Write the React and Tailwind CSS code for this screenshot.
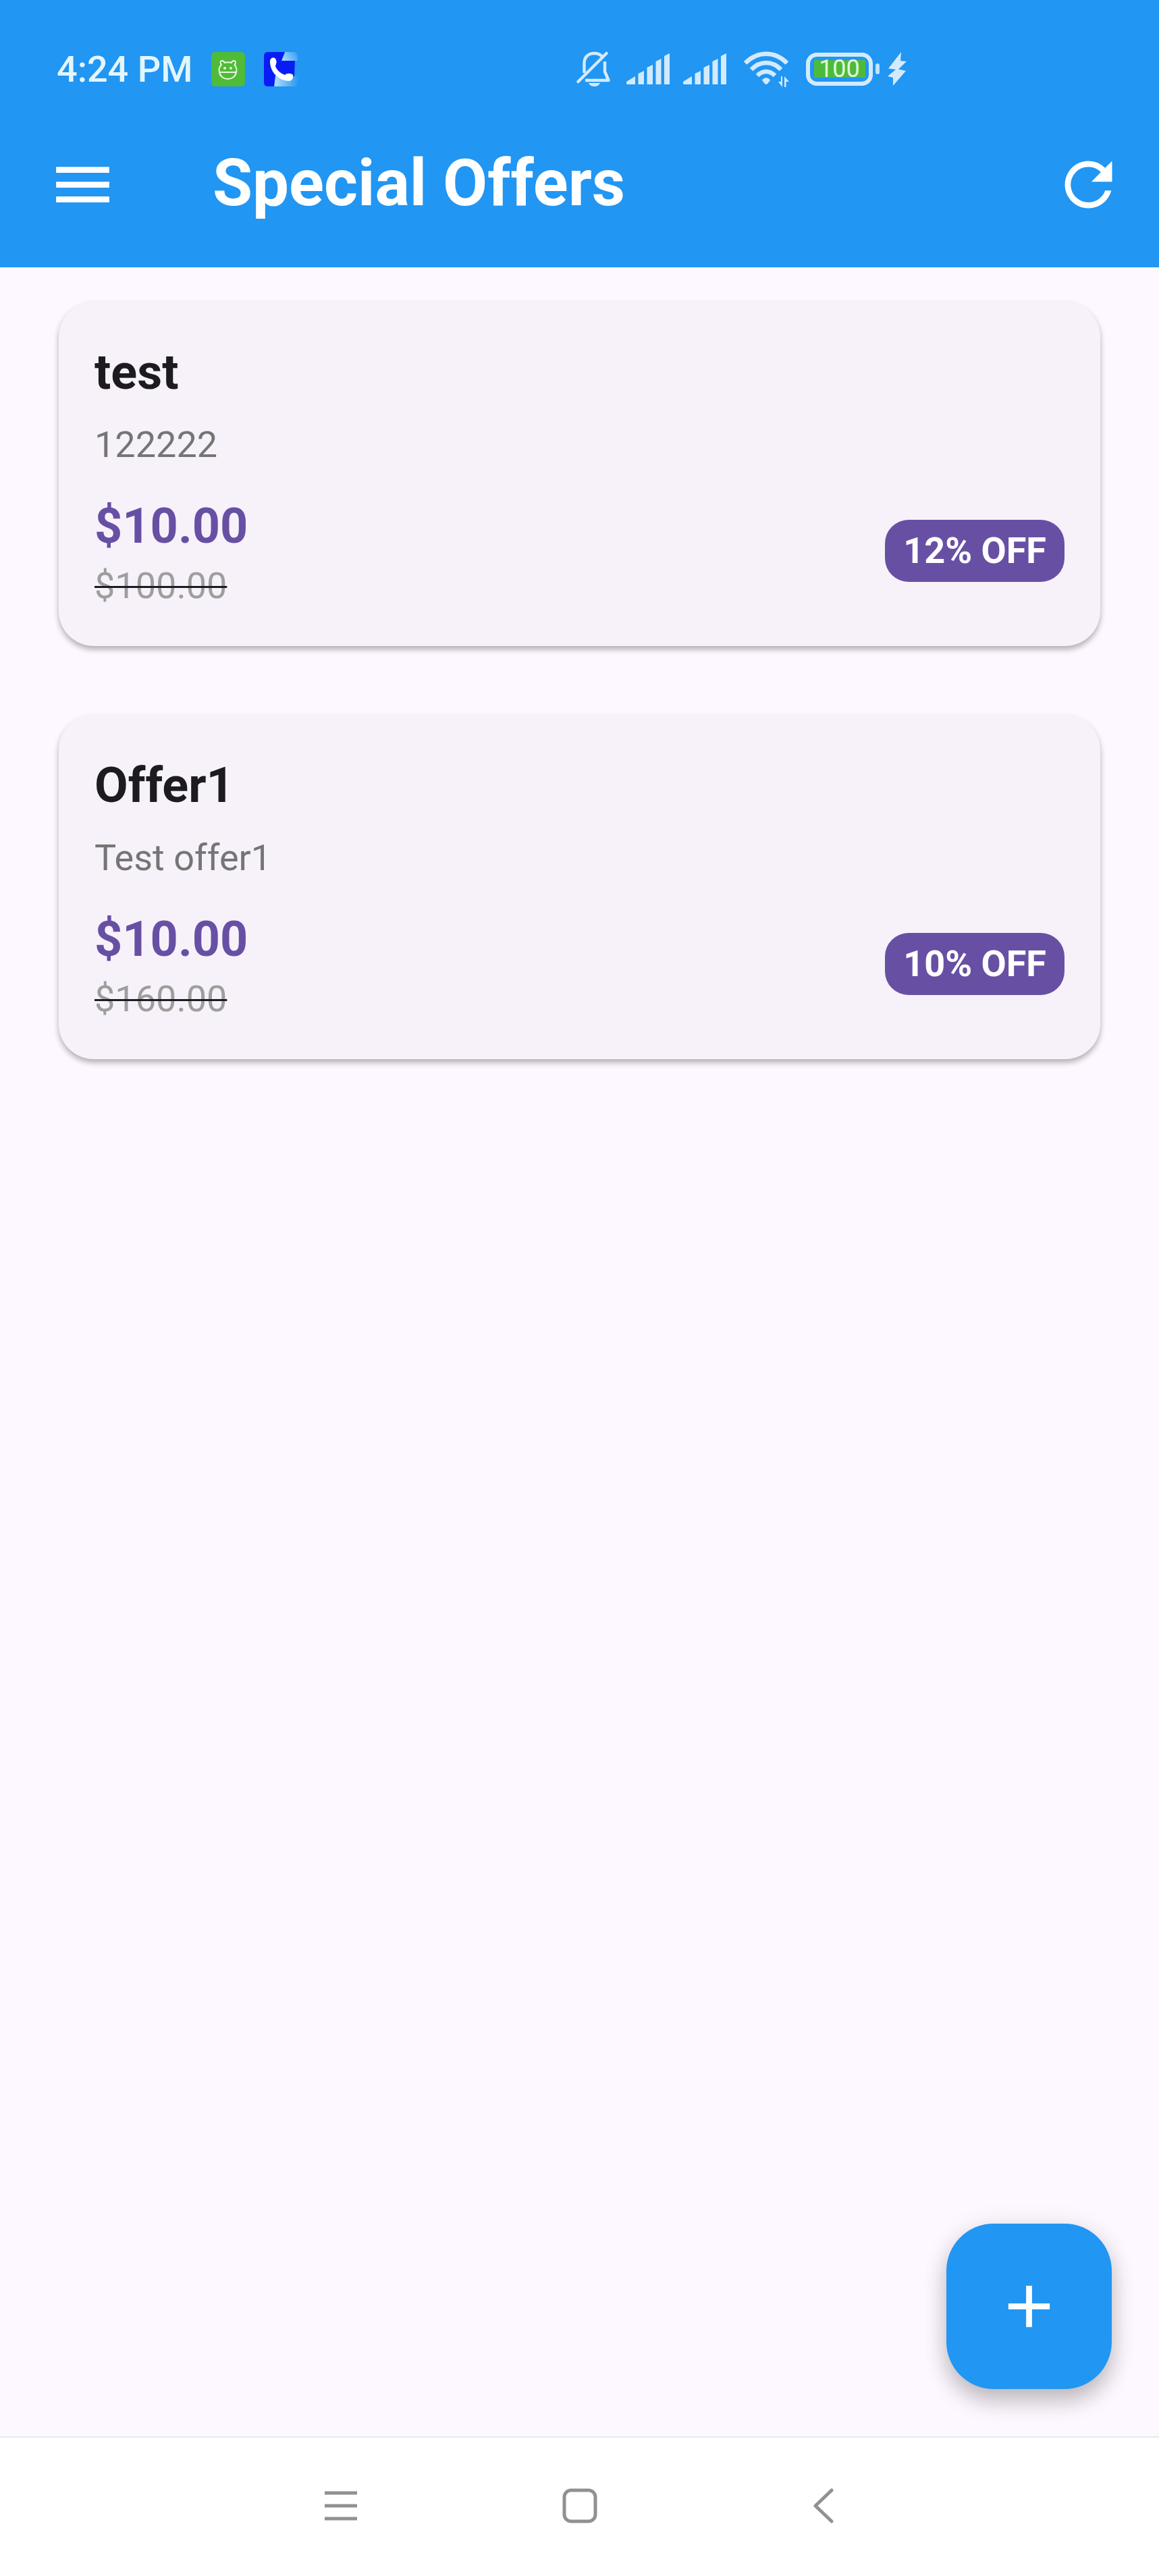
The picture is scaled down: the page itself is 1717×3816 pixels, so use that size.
import { MdAdd, MdMenu, MdRefresh } from "react-icons/md";

const offers = [
  { id: 1, title: "test", description: "122222", price: "$10.00", oldPrice: "$100.00", discount: "12% OFF" },
  { id: 2, title: "Offer1", description: "Test offer1", price: "$10.00", oldPrice: "$160.00", discount: "10% OFF" },
];

function RobotAppIcon() {
  return (
    <svg className="h-[51px] w-[50px]" viewBox="0 0 50 51" aria-hidden="true">
      <rect width="50" height="51" rx="6" fill="#4fbb38" />
      <g fill="none" stroke="#e6f8dc" strokeWidth="2" strokeLinejoin="round">
        <path d="M12 30C11 26 12 22 15 19C13 17 13 13 16 13C18 13 19 14 19.500 16C23 15 27 15 30 16C30.500 14 31.500 13 33.500 13C36.500 13 36.500 17 34.500 19C37 22 38 26 37 30C36 36 31 40 24.500 40C18 40 13 36 12 30Z" />
        <path d="M12 30H37" />
      </g>
      <circle cx="20" cy="24" r="2" fill="#e6f8dc" />
      <circle cx="29" cy="24" r="2" fill="#e6f8dc" />
    </svg>
  );
}

function CallerAppIcon() {
  return (
    <svg className="h-[51px] w-[52px]" viewBox="0 0 52 51" aria-hidden="true">
      <defs>
        <linearGradient id="callerTop" x1="0" x2="1" y1="0.300" y2="0">
          <stop offset="0" stopColor="#9fd4fb" />
          <stop offset="1" stopColor="#2f9cf4" />
        </linearGradient>
        <linearGradient id="callerBottom" x1="0" x2="1" y1="0" y2="0">
          <stop offset="0" stopColor="#b4defc" />
          <stop offset="1" stopColor="#2196f3" />
        </linearGradient>
      </defs>
      <path d="M31 0H44Q50 1 50 7V13H26Z" fill="url(#callerTop)" />
      <path d="M18 30L46 36L52 34V44Q51 51 44 51H15Z" fill="url(#callerBottom)" />
      <path d="M6 0H31L26 13H46L45 36L30 42L17 34L15 51H6Q0 51 0 45V6Q0 0 6 0Z" fill="#0a1cf5" />
      <path d="M9 14C9 9 14 7 17 10C20 14 18 18 17 21C19 27 25 32 31 34C34 31 40 31 43 34C44 38 42 42 38 43C22 43 9 30 9 14Z" fill="#ffffff" />
    </svg>
  );
}

function BellOffIcon() {
  return (
    <svg className="h-[52px] w-[50px]" viewBox="0 0 50 52" fill="none" stroke="#d3eafc" strokeWidth="4.500" aria-hidden="true">
      <path d="M11.500 32V18C11.500 8 18 3 26.500 3C31 3 35 4.500 38 7.500" />
      <path d="M42 15V30L47.500 43H13" strokeLinejoin="round" />
      <path d="M2.500 45L44.500 3" strokeLinecap="round" />
      <path d="M18 47H35Q33 52 26.500 52Q20 52 18 47Z" fill="#d3eafc" stroke="none" />
    </svg>
  );
}

function SignalIcon() {
  return (
    <svg className="h-[46px] w-[64px]" viewBox="0 0 64 46" fill="#d3eafc" stroke="none" aria-hidden="true">
      <path d="M0 45V42L13 34V46H1Z" />
      <path d="M17.500 30L26 26V46H17.500Z" />
      <path d="M30.500 21L39 17V46H30.500Z" />
      <path d="M43.500 12L51.500 8V46H43.500Z" />
      <path d="M56 4L64 0V46H56Z" />
    </svg>
  );
}

function WifiIcon() {
  return (
    <svg className="h-[53px] w-[68px]" viewBox="0 0 68 53" fill="none" stroke="#d3eafc" strokeWidth="6.500" aria-hidden="true">
      <path d="M2 17.500C20 -1 46 -1 64 17.500" />
      <path d="M11 27C24 13.500 42 13.500 55 27" />
      <path d="M20 36C28 28 38 28 46 36" />
      <path d="M27 43C30 38 36 38 39 43L35 48Q33 50 31 48Z" fill="#d3eafc" stroke="none" />
      <path d="M57 37V53L51 45H55V37ZM60 53V37L67 45H62.500V53Z" fill="#d3eafc" stroke="none" />
    </svg>
  );
}

function BatteryIcon() {
  return (
    <div className="flex items-center gap-1">
      <div className="flex h-[49px] w-[99px] items-center justify-center rounded-2xl border-[6px] border-[#d3eafc]">
        <span className="flex h-[26px] w-[76px] items-center justify-center bg-[#4cbb3c] text-[36px] leading-none text-[#e2f8dc]">
          100
        </span>
      </div>
      <span className="h-4 w-[6px] rounded-full bg-[#bfe3fb]" />
    </div>
  );
}

function BoltIcon() {
  return (
    <svg className="h-[51px] w-7" viewBox="0 0 28 51" fill="#d3eafc" aria-hidden="true">
      <path d="M20 0L1 24.500L12 26L0 36L8 38L8 50L27 28L16 25.500L28 14L19 13Z" />
    </svg>
  );
}

function StatusBar() {
  return (
    <div className="flex h-[150px] items-center justify-between pt-[54px] pr-[374px] pl-[84px]">
      <div className="flex items-center">
        <span className="pt-[2px] text-[54px] leading-[52px] font-medium text-[#e3f6fd]">4:24 PM</span>
        <span className="ml-7 flex items-center gap-7">
          <RobotAppIcon />
          <CallerAppIcon />
        </span>
      </div>
      <div className="flex items-center">
        <BellOffIcon />
        <span className="ml-6 flex gap-5">
          <SignalIcon />
          <SignalIcon />
        </span>
        <span className="ml-[26px] flex items-center gap-6">
          <WifiIcon />
          <BatteryIcon />
        </span>
        <span className="ml-3">
          <BoltIcon />
        </span>
      </div>
    </div>
  );
}

function OfferCard({ offer }) {
  return (
    <article className="rounded-[52px] bg-[#f7f2fa] px-[53px] pt-[53px] pb-[53px] shadow-[0_5px_8px_rgba(0,0,0,0.3)]">
      <h2 className="text-[72px] leading-[104px] font-bold text-[#1d1b20]">{offer.title}</h2>
      <p className="mt-[20px] text-[54px] leading-[70px] text-[#757575]">{offer.description}</p>
      <div className="mt-[34px] flex items-center justify-between">
        <div>
          <p className="text-[72px] leading-[104px] font-bold text-[#6750a4]">{offer.price}</p>
          <p className="text-[54px] leading-[72px] text-[#9e9e9e]">
            <s className="decoration-[#1d1b20] decoration-[3px]">{offer.oldPrice}</s>
          </p>
        </div>
        <span className="rounded-[35px] bg-[#6750a4] px-[27px] py-[11px] text-[54px] leading-[70px] font-bold text-white">
          {offer.discount}
        </span>
      </div>
    </article>
  );
}

export default function App() {
  return (
    <div className="flex min-h-screen flex-col bg-[#fdf8ff] font-['Roboto',sans-serif]">
      <header className="bg-[#2196f3] text-white">
        <StatusBar />
        <div className="flex h-[246px] items-center pr-[52px] pl-[70px]">
          <button type="button" aria-label="Open menu">
            <MdMenu className="size-[105px]" />
          </button>
          <h1 className="ml-[140px] flex-1 pb-1 text-[96px] leading-[120px] font-bold">Special Offers</h1>
          <button type="button" aria-label="Refresh">
            <MdRefresh className="size-[105px]" />
          </button>
        </div>
      </header>

      <main className="relative flex flex-1 flex-col gap-[102px] px-[87px] pt-[51px]">
        {offers.map((offer) => (
          <OfferCard key={offer.id} offer={offer} />
        ))}
        <button
          type="button"
          aria-label="Add offer"
          className="absolute right-[70px] bottom-[70px] flex size-[245px] items-center justify-center rounded-[70px] bg-[#2196f3] text-white shadow-[0_18px_32px_rgba(0,0,0,0.22),0_4px_40px_rgba(0,0,0,0.08)]"
        >
          <MdAdd className="size-[105px]" />
        </button>
      </main>

      <nav className="relative flex h-[207px] items-center justify-center gap-[302px] border-t-2 border-[#e8eae8] bg-white pb-[3px] text-[#919191]">
        <button type="button" aria-label="Recent apps">
          <svg className="size-[52px]" viewBox="0 0 52 52" fill="none" stroke="currentColor" strokeWidth="5">
            <path d="M2 7H50M2 26H50M2 45H50" />
          </svg>
        </button>
        <button type="button" aria-label="Home">
          <svg className="size-[52px]" viewBox="0 0 52 52" fill="none" stroke="currentColor" strokeWidth="5">
            <rect x="3" y="3" width="46" height="46" rx="10" />
          </svg>
        </button>
        <button type="button" aria-label="Back">
          <svg className="size-[52px]" viewBox="0 0 52 52" fill="none" stroke="currentColor" strokeWidth="5" strokeLinecap="round" strokeLinejoin="round">
            <path d="M45 3L21 26L45 49" />
          </svg>
        </button>
      </nav>
    </div>
  );
}
